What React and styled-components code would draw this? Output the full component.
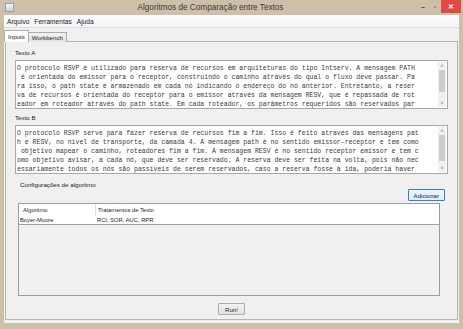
import React from 'react';
import styled, { createGlobalStyle } from 'styled-components';

const GlobalStyle = createGlobalStyle`
  html, body {
    margin: 0;
    padding: 0;
    background: #cbbda6;
  }
`;

const Window = styled.div`
  width: 463px;
  height: 329px;
  display: flex;
  flex-direction: column;
  background: #cdbfa8;
  font-family: 'Liberation Sans', Arial, sans-serif;
  overflow: hidden;
`;

const TitleBar = styled.div`
  height: 15px;
  display: flex;
  align-items: center;
  flex-shrink: 0;
`;

const AppIcon = styled.div`
  width: 9px;
  height: 9px;
  margin-left: 5px;
  border: 1px solid #8ea2b8;
  background: linear-gradient(#f4f6f8, #c9d4df);
  box-sizing: border-box;
`;

const Title = styled.div`
  flex: 1;
  text-align: center;
  font-size: 8.2px;
  color: #3c3a36;
  padding-right: 10px;
`;

const Controls = styled.div`
  display: flex;
  align-self: flex-start;
  height: 14px;
  margin-right: 2px;
`;

const Ctl = styled.div`
  width: ${(p) => p.$w}px;
  height: 13px;
  display: flex;
  align-items: center;
  justify-content: center;
  background: ${(p) => (p.$close ? '#e04a46' : 'transparent')};
  color: ${(p) => (p.$close ? '#fff' : '#3a3a3a')};
  font-size: 7px;
  font-weight: bold;
`;

const Client = styled.div`
  flex: 1;
  margin: 0 4px 6px 4px;
  background: #f0f0f0;
  display: flex;
  flex-direction: column;
`;

const MenuBar = styled.div`
  height: 12px;
  display: flex;
  align-items: center;
  gap: 3px;
  padding-left: 2px;
  background: linear-gradient(#fbfcfd, #f3f5f8);
  border-bottom: 1px solid #d8dce2;
  font-size: 6.6px;
  color: #222;
`;

const MenuItem = styled.span`
  padding: 0 1px;
`;

const TabStrip = styled.div`
  display: flex;
  align-items: flex-end;
  margin-top: 2px;
  height: 12px;
  position: relative;
  z-index: 1;
`;

const Tab = styled.div`
  height: ${(p) => (p.$active ? 12 : 10)}px;
  padding: 0 3px;
  display: flex;
  align-items: center;
  font-size: 6.2px;
  color: #222;
  border: 1px solid #acacac;
  border-bottom: ${(p) => (p.$active ? '1px solid #fff' : 'none')};
  background: ${(p) => (p.$active ? '#fff' : 'linear-gradient(#f0f0f0, #e5e5e5)')};
  box-sizing: border-box;
  margin-left: ${(p) => (p.$active ? 0 : -1)}px;
`;

const TabPanel = styled.div`
  flex: 1;
  margin: -1px 1px 3px 1px;
  border: 1px solid #b5b5b5;
  background: #f0f0f0;
  display: flex;
  flex-direction: column;
  padding: 7px 9px 0 9px;
`;

const Label = styled.div`
  font-size: 6.2px;
  color: #222;
  height: 8px;
  line-height: 8px;
  margin-left: ${(p) => p.$indent || 0}px;
  margin-top: ${(p) => p.$mt || 0}px;
`;

const TextArea = styled.div`
  margin-top: 3px;
  height: 49px;
  border: 1px solid #a8a8a8;
  background: #fff;
  display: flex;
  box-sizing: border-box;
`;

const TextBody = styled.div`
  flex: 1;
  padding: 3px 0 0 1px;
  font-family: 'Liberation Mono', 'Courier New', monospace;
  font-size: 6.5px;
  line-height: 9px;
  color: #3a3a3a;
  white-space: pre;
  overflow: hidden;
`;

const ScrollBar = styled.div`
  width: 8px;
  margin: 1px 1px 1px 0;
  display: flex;
  flex-direction: column;
  background: #f0f0f0;
`;

const Arrow = styled.div`
  height: 8px;
  display: flex;
  align-items: center;
  justify-content: center;
  font-size: 5px;
  color: #606060;
`;

const Track = styled.div`
  flex: 1;
  display: flex;
  flex-direction: column;
`;

const Thumb = styled.div`
  height: ${(p) => p.$h}px;
  margin: 0 1px;
  background: #cdcdcd;
`;

const Group = styled.div`
  margin-top: 7px;
  display: flex;
  flex-direction: column;
`;

const ButtonRow = styled.div`
  display: flex;
  justify-content: ${(p) => p.$align || 'flex-end'};
  padding-right: ${(p) => p.$pr || 0}px;
  margin-top: ${(p) => p.$mt || 0}px;
`;

const Button = styled.div`
  height: 12px;
  padding: 0 ${(p) => p.$px}px;
  display: flex;
  align-items: center;
  justify-content: center;
  font-size: 6.1px;
  color: #222;
  border: 1px solid ${(p) => (p.$focus ? '#3c7fb1' : '#acacac')};
  background: ${(p) => (p.$focus ? 'linear-gradient(#eaf6fd, #d9f0fc)' : 'linear-gradient(#f2f2f2, #e2e2e2)')};
  box-sizing: border-box;
  border-radius: 1px;
`;

const Table = styled.div`
  margin: 2px 8px 0 3px;
  height: 93px;
  border: 1px solid #9c9c9c;
  background: #f0f0f0;
  display: flex;
  flex-direction: column;
  box-sizing: border-box;
`;

const Row = styled.div`
  display: grid;
  grid-template-columns: 77px 1fr;
  height: ${(p) => p.$h}px;
  align-items: center;
  background: #fff;
  font-size: 5.8px;
  color: #222;
  border-bottom: ${(p) => (p.$last ? '1px solid #a0a0a0' : 'none')};
`;

const Cell = styled.div`
  padding-left: ${(p) => p.$pl}px;
  border-right: ${(p) => (p.$divide ? '1px solid #e0e0e0' : 'none')};
  height: 100%;
  display: flex;
  align-items: center;
`;

const textA = [
  'O protocolo RSVP é utilizado para reserva de recursos em arquiteturas do tipo Intserv. A mensagem PATH',
  ' é orientada do emissor para o receptor, construindo o caminho através do qual o fluxo deve passar. Pa',
  'ra isso, o path state é armazenado em cada nó indicando o endereço do nó anterior. Entretanto, a reser',
  'va de recursos é orientada do receptor para o emissor através da mensagem RESV, que é repassada de rot',
  'eador em roteador através do path state. Em cada roteador, os parâmetros requeridos são reservados par',
];

const textB = [
  'O protocolo RSVP serve para fazer reserva de recursos fim a fim. Isso é feito através das mensagens pat',
  'h e RESV, no nível de transporte, da camada 4. A mensagem path é no sentido emissor-receptor e tem como',
  ' objetivo mapear o caminho, roteadores fim a fim. A mensagem RESV é no sentido receptor emissor e tem c',
  'omo objetivo avisar, a cada nó, que deve ser reservado. A reserva deve ser feita na volta, pois não nec',
  'essariamente todos os nós são passíveis de serem reservados, caso a reserva fosse à ida, poderia haver',
];

function TextBox({ lines, thumb }) {
  return (
    <TextArea>
      <TextBody>
        {lines.map((l, i) => (
          <div key={i}>{l}</div>
        ))}
      </TextBody>
      <ScrollBar>
        <Arrow>˄</Arrow>
        <Track>
          <Thumb $h={thumb} />
        </Track>
        <Arrow>˅</Arrow>
      </ScrollBar>
    </TextArea>
  );
}

export default function App() {
  return (
    <>
      <GlobalStyle />
      <Window>
        <TitleBar>
          <AppIcon />
          <Title>Algoritmos de Comparação entre Textos</Title>
          <Controls>
            <Ctl $w={12}>–</Ctl>
            <Ctl $w={12}>▫</Ctl>
            <Ctl $w={20} $close>✕</Ctl>
          </Controls>
        </TitleBar>
        <Client>
          <MenuBar>
            <MenuItem>Arquivo</MenuItem>
            <MenuItem>Ferramentas</MenuItem>
            <MenuItem>Ajuda</MenuItem>
          </MenuBar>
          <TabStrip>
            <Tab $active>Inputs</Tab>
            <Tab>Workbench</Tab>
          </TabStrip>
          <TabPanel>
            <Label>Texto A</Label>
            <TextBox lines={textA} thumb={22} />
            <Label $mt={5}>Texto B</Label>
            <TextBox lines={textB} thumb={26} />
            <Group>
              <Label $indent={5}>Configurações de algoritmo</Label>
              <ButtonRow $pr={3}>
                <Button $px={5} $focus>Adicionar</Button>
              </ButtonRow>
              <Table>
                <Row $h={12}>
                  <Cell $pl={4} $divide>Algoritmo</Cell>
                  <Cell $pl={2}>Tratamentos de Texto</Cell>
                </Row>
                <Row $h={8} $last>
                  <Cell $pl={1}>Boyer-Moore</Cell>
                  <Cell $pl={1}>RCI, SOR, AUC, RPR</Cell>
                </Row>
              </Table>
              <ButtonRow $align="center" $mt={7}>
                <Button $px={6}>Run!</Button>
              </ButtonRow>
            </Group>
          </TabPanel>
        </Client>
      </Window>
    </>
  );
}
